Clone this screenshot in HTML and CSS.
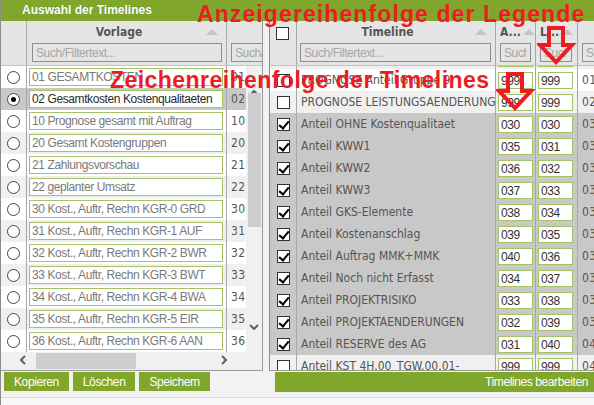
FILE: index.html
```html
<!DOCTYPE html>
<html lang="de">
<head>
  <meta charset="UTF-8">
  <meta name="viewport" content="width=device-width, initial-scale=1.0">
  <title>Auswahl der Timelines</title>
  <link rel="stylesheet" href="styles.css">
</head>
<body>
  <div class="app">
    <header class="titlebar">Auswahl der Timelines</header>

    <div class="workspace">
      <!-- Vorlagen -->
      <section class="panel panel-left">
        <div class="list-head">
          <div class="hcell hcell-radio"></div>
          <div class="hcell hcell-name">
            <div class="hlabel"><span class="htext">Vorlage</span><i class="sort"></i></div>
            <input class="filter" type="text" placeholder="Such/Filtertext...">
          </div>
          <div class="hcell hcell-num">
            <div class="hlabel"></div>
            <input class="filter" type="text" placeholder="Such/Filtertext...">
          </div>
        </div>

        <div class="list-body">
          <div class="rows">
            <div class="row">
              <div class="cell cell-radio"><span class="radio"></span></div>
              <div class="cell cell-name"><input class="field" type="text" value="01 GESAMTKOSTEN"></div>
              <div class="cell cell-num">01</div>
            </div>
            <div class="row selected">
              <div class="cell cell-radio"><span class="radio checked"></span></div>
              <div class="cell cell-name"><input class="field" type="text" value="02 Gesamtkosten Kostenqualitaeten"></div>
              <div class="cell cell-num">02</div>
            </div>
            <div class="row">
              <div class="cell cell-radio"><span class="radio"></span></div>
              <div class="cell cell-name"><input class="field" type="text" value="10 Prognose gesamt mit Auftrag"></div>
              <div class="cell cell-num">10</div>
            </div>
            <div class="row">
              <div class="cell cell-radio"><span class="radio"></span></div>
              <div class="cell cell-name"><input class="field" type="text" value="20 Gesamt Kostengruppen"></div>
              <div class="cell cell-num">20</div>
            </div>
            <div class="row">
              <div class="cell cell-radio"><span class="radio"></span></div>
              <div class="cell cell-name"><input class="field" type="text" value="21 Zahlungsvorschau"></div>
              <div class="cell cell-num">21</div>
            </div>
            <div class="row">
              <div class="cell cell-radio"><span class="radio"></span></div>
              <div class="cell cell-name"><input class="field" type="text" value="22 geplanter Umsatz"></div>
              <div class="cell cell-num">22</div>
            </div>
            <div class="row">
              <div class="cell cell-radio"><span class="radio"></span></div>
              <div class="cell cell-name"><input class="field" type="text" value="30 Kost., Auftr, Rechn KGR-0 GRD"></div>
              <div class="cell cell-num">30</div>
            </div>
            <div class="row">
              <div class="cell cell-radio"><span class="radio"></span></div>
              <div class="cell cell-name"><input class="field" type="text" value="31 Kost., Auftr, Rechn KGR-1 AUF"></div>
              <div class="cell cell-num">31</div>
            </div>
            <div class="row">
              <div class="cell cell-radio"><span class="radio"></span></div>
              <div class="cell cell-name"><input class="field" type="text" value="32 Kost., Auftr, Rechn KGR-2 BWR"></div>
              <div class="cell cell-num">32</div>
            </div>
            <div class="row">
              <div class="cell cell-radio"><span class="radio"></span></div>
              <div class="cell cell-name"><input class="field" type="text" value="33 Kost., Auftr, Rechn KGR-3 BWT"></div>
              <div class="cell cell-num">33</div>
            </div>
            <div class="row">
              <div class="cell cell-radio"><span class="radio"></span></div>
              <div class="cell cell-name"><input class="field" type="text" value="34 Kost., Auftr, Rechn KGR-4 BWA"></div>
              <div class="cell cell-num">34</div>
            </div>
            <div class="row">
              <div class="cell cell-radio"><span class="radio"></span></div>
              <div class="cell cell-name"><input class="field" type="text" value="35 Kost., Auftr, Rechn KGR-5 EIR"></div>
              <div class="cell cell-num">35</div>
            </div>
            <div class="row">
              <div class="cell cell-radio"><span class="radio"></span></div>
              <div class="cell cell-name"><input class="field" type="text" value="36 Kost., Auftr, Rechn KGR-6 AAN"></div>
              <div class="cell cell-num">36</div>
            </div>
          </div>

          <div class="vscroll">
            <div class="vs-up">
              <svg width="10" height="6" viewBox="0 0 10 6"><polyline points="1,5 5,1 9,5" /></svg>
            </div>
            <div class="vs-thumb"></div>
            <div class="vs-down">
              <svg width="10" height="6" viewBox="0 0 10 6"><polyline points="1,1 5,5 9,1" /></svg>
            </div>
          </div>
        </div>

        <div class="hscroll">
          <div class="hs-left">
            <svg width="6" height="10" viewBox="0 0 6 10"><polyline points="5,1 1,5 5,9" /></svg>
          </div>
          <div class="hs-thumb"></div>
          <div class="hs-right">
            <svg width="6" height="10" viewBox="0 0 6 10"><polyline points="1,1 5,5 1,9" /></svg>
          </div>
        </div>
      </section>

      <!-- Timelines -->
      <section class="panel panel-right">
        <div class="grid-head">
          <div class="rcell rcell-check"><span class="check"></span></div>
          <div class="rcell rcell-name">
            <div class="hlabel"><span class="htext">Timeline</span><i class="sort"></i></div>
            <input class="filter" type="text" placeholder="Such/Filtertext...">
          </div>
          <div class="rcell rcell-a">
            <div class="hlabel short"><span>A...</span><i class="sort"></i></div>
            <input class="filter" type="text" placeholder="Such/Filtertext...">
          </div>
          <div class="rcell rcell-l">
            <div class="hlabel short"><span>L...</span><i class="sort"></i></div>
            <input class="filter" type="text" placeholder="Such/Filtertext...">
          </div>
          <div class="rcell rcell-key">
            <div class="hlabel"></div>
            <input class="filter" type="text" placeholder="Such/Filtertext...">
          </div>
        </div>

        <div class="grid-body">
          <div class="grid-rows">
            <div class="rrow">
              <div class="rcell rcell-check"><span class="check"></span></div>
              <div class="rcell rcell-name">PROGNOSE Anteil Gruppe 8</div>
              <div class="rcell rcell-a"><input class="field" type="text" value="999"></div>
              <div class="rcell rcell-l"><input class="field" type="text" value="999"></div>
              <div class="rcell rcell-key">00</div>
            </div>
            <div class="rrow">
              <div class="rcell rcell-check"><span class="check"></span></div>
              <div class="rcell rcell-name">PROGNOSE Anteil Gruppe 9</div>
              <div class="rcell rcell-a"><input class="field" type="text" value="999"></div>
              <div class="rcell rcell-l"><input class="field" type="text" value="999"></div>
              <div class="rcell rcell-key">01</div>
            </div>
            <div class="rrow">
              <div class="rcell rcell-check"><span class="check"></span></div>
              <div class="rcell rcell-name">PROGNOSE LEISTUNGSAENDERUNG</div>
              <div class="rcell rcell-a"><input class="field" type="text" value="999"></div>
              <div class="rcell rcell-l"><input class="field" type="text" value="999"></div>
              <div class="rcell rcell-key">02</div>
            </div>
            <div class="rrow selected">
              <div class="rcell rcell-check"><span class="check checked"></span></div>
              <div class="rcell rcell-name">Anteil OHNE Kostenqualitaet</div>
              <div class="rcell rcell-a"><input class="field" type="text" value="030"></div>
              <div class="rcell rcell-l"><input class="field" type="text" value="030"></div>
              <div class="rcell rcell-key">030</div>
            </div>
            <div class="rrow selected">
              <div class="rcell rcell-check"><span class="check checked"></span></div>
              <div class="rcell rcell-name">Anteil KWW1</div>
              <div class="rcell rcell-a"><input class="field" type="text" value="035"></div>
              <div class="rcell rcell-l"><input class="field" type="text" value="031"></div>
              <div class="rcell rcell-key">031</div>
            </div>
            <div class="rrow selected">
              <div class="rcell rcell-check"><span class="check checked"></span></div>
              <div class="rcell rcell-name">Anteil KWW2</div>
              <div class="rcell rcell-a"><input class="field" type="text" value="036"></div>
              <div class="rcell rcell-l"><input class="field" type="text" value="032"></div>
              <div class="rcell rcell-key">032</div>
            </div>
            <div class="rrow selected">
              <div class="rcell rcell-check"><span class="check checked"></span></div>
              <div class="rcell rcell-name">Anteil KWW3</div>
              <div class="rcell rcell-a"><input class="field" type="text" value="037"></div>
              <div class="rcell rcell-l"><input class="field" type="text" value="033"></div>
              <div class="rcell rcell-key">033</div>
            </div>
            <div class="rrow selected">
              <div class="rcell rcell-check"><span class="check checked"></span></div>
              <div class="rcell rcell-name">Anteil GKS-Elemente</div>
              <div class="rcell rcell-a"><input class="field" type="text" value="038"></div>
              <div class="rcell rcell-l"><input class="field" type="text" value="034"></div>
              <div class="rcell rcell-key">034</div>
            </div>
            <div class="rrow selected">
              <div class="rcell rcell-check"><span class="check checked"></span></div>
              <div class="rcell rcell-name">Anteil Kostenanschlag</div>
              <div class="rcell rcell-a"><input class="field" type="text" value="039"></div>
              <div class="rcell rcell-l"><input class="field" type="text" value="035"></div>
              <div class="rcell rcell-key">035</div>
            </div>
            <div class="rrow selected">
              <div class="rcell rcell-check"><span class="check checked"></span></div>
              <div class="rcell rcell-name">Anteil Auftrag MMK+MMK</div>
              <div class="rcell rcell-a"><input class="field" type="text" value="040"></div>
              <div class="rcell rcell-l"><input class="field" type="text" value="036"></div>
              <div class="rcell rcell-key">036</div>
            </div>
            <div class="rrow selected">
              <div class="rcell rcell-check"><span class="check checked"></span></div>
              <div class="rcell rcell-name">Anteil Noch nicht Erfasst</div>
              <div class="rcell rcell-a"><input class="field" type="text" value="034"></div>
              <div class="rcell rcell-l"><input class="field" type="text" value="037"></div>
              <div class="rcell rcell-key">037</div>
            </div>
            <div class="rrow selected">
              <div class="rcell rcell-check"><span class="check checked"></span></div>
              <div class="rcell rcell-name">Anteil PROJEKTRISIKO</div>
              <div class="rcell rcell-a"><input class="field" type="text" value="033"></div>
              <div class="rcell rcell-l"><input class="field" type="text" value="038"></div>
              <div class="rcell rcell-key">038</div>
            </div>
            <div class="rrow selected">
              <div class="rcell rcell-check"><span class="check checked"></span></div>
              <div class="rcell rcell-name">Anteil PROJEKTAENDERUNGEN</div>
              <div class="rcell rcell-a"><input class="field" type="text" value="032"></div>
              <div class="rcell rcell-l"><input class="field" type="text" value="039"></div>
              <div class="rcell rcell-key">039</div>
            </div>
            <div class="rrow selected">
              <div class="rcell rcell-check"><span class="check checked"></span></div>
              <div class="rcell rcell-name">Anteil RESERVE des AG</div>
              <div class="rcell rcell-a"><input class="field" type="text" value="031"></div>
              <div class="rcell rcell-l"><input class="field" type="text" value="040"></div>
              <div class="rcell rcell-key">040</div>
            </div>
            <div class="rrow">
              <div class="rcell rcell-check"><span class="check"></span></div>
              <div class="rcell rcell-name">Anteil KST 4H.00_TGW.00.01-</div>
              <div class="rcell rcell-a"><input class="field" type="text" value="999"></div>
              <div class="rcell rcell-l"><input class="field" type="text" value="999"></div>
              <div class="rcell rcell-key">041</div>
            </div>
          </div>
        </div>
      </section>
    </div>

    <div class="actions">
      <div class="button-group">
        <button type="button" class="btn">Kopieren</button>
        <button type="button" class="btn">Löschen</button>
        <button type="button" class="btn">Speichern</button>
      </div>
      <div class="edit-bar">Timelines bearbeiten</div>
    </div>
    <div class="statusbar"></div>

    <!-- Hinweise zur Sortierung -->
    <div class="note note-legend">Anzeigereihenfolge der Legende</div>
    <div class="note note-draw">Zeichenreihenfolge der Timelines</div>
    <svg class="note-arrow arrow-legend" width="40" height="40" viewBox="0 0 40 40">
      <path d="M12,3 H26 V20 H35 L19,37 L3,20 H12 Z" />
    </svg>
    <svg class="note-arrow arrow-draw" width="40" height="40" viewBox="0 0 40 40">
      <path d="M12,3 H26 V20 H35 L19,37 L3,20 H12 Z" />
    </svg>
  </div>
</body>
</html>
```

FILE: styles.css
```css
:root {
  --green: #80a62c;
  --head-bg: #e5e5e5;
  --row-alt: #f0f0f0;
  --row-selected: #c8c8c8;
  --grid-line: #a8a8a8;
  --field-border: #a5c267;
  --ui-font: "Liberation Sans", Arial, sans-serif;
  --grid-font: "DejaVu Sans Condensed", "DejaVu Sans", sans-serif;
}

* {
  box-sizing: border-box;
}

body {
  margin: 0;
  background: #f2f2f2;
  font-family: var(--ui-font);
  font-size: 12px;
}

.app {
  position: relative;
  width: 594px;
  height: 405px;
  overflow: hidden;
  border-left: 1px solid #8c8c8c;
}

.titlebar {
  height: 21px;
  padding-left: 21px;
  background: var(--green);
  color: #fff;
  font-weight: bold;
  line-height: 21px;
  text-shadow: 0 0 1px rgba(0, 0, 0, 0.25);
}

.workspace {
  display: flex;
  gap: 6px;
  height: 350px;
}

.panel {
  background: #fff;
  border-bottom: 1px solid #9a9a9a;
  overflow: hidden;
}

.panel-left {
  width: 262px;
  flex: none;
  border-right: 1px solid #9a9a9a;
}

.panel-right {
  flex: 1;
  border-left: 1px solid #8a8a8a;
}

/* header rows */

.list-head,
.grid-head {
  display: flex;
  height: 45px;
  background: var(--head-bg);
  border-bottom: 1px solid #c4c4c4;
}

.hcell,
.grid-head .rcell {
  border-right: 1px solid var(--grid-line);
}

.hcell-radio {
  width: 26px;
}

.hcell-name {
  width: 200px;
  padding: 0 4px 0 5px;
}

.hcell-num {
  flex: 1;
  padding-left: 4px;
  border-right: none;
  overflow: hidden;
}

.hcell-num .filter {
  width: 60px;
}

.hlabel {
  display: flex;
  align-items: center;
  height: 22px;
  font-family: var(--grid-font);
  font-weight: bold;
  color: #555;
}

.hlabel .htext {
  flex: 1;
  text-align: center;
}

.hlabel.short span {
  margin-right: 1px;
}

.sort {
  width: 0;
  height: 0;
  margin-right: 4px;
  border-left: 6px solid transparent;
  border-right: 6px solid transparent;
  border-bottom: 6px solid #c4c4c4;
}

.filter {
  width: 100%;
  height: 19px;
  padding: 0 3px;
  border: 1px solid #8e8e8e;
  background: var(--head-bg);
  font-family: var(--ui-font);
  font-size: 12px;
  letter-spacing: -0.4px;
}

.filter::placeholder {
  color: #a6a6a6;
}

/* Vorlagen list */

.list-body {
  display: flex;
  height: 286px;
}

.rows {
  width: 245px;
}

.row {
  display: flex;
  height: 22px;
}

.row:nth-child(even) {
  background: var(--row-alt);
}

.row.selected {
  background: var(--row-selected);
}

.cell {
  display: flex;
  align-items: center;
  border-right: 1px solid var(--grid-line);
}

.cell-radio {
  width: 26px;
  justify-content: center;
}

.cell-name {
  width: 200px;
  padding: 0 3px 0 2px;
}

.cell-num {
  width: 19px;
  padding-left: 4px;
  border-right: none;
  font-family: var(--grid-font);
  color: #555;
  letter-spacing: 0.5px;
}

.radio {
  width: 13px;
  height: 13px;
  border: 1px solid #444;
  border-radius: 50%;
  background: #fff;
  display: flex;
  align-items: center;
  justify-content: center;
}

.radio.checked::after {
  content: "";
  width: 5px;
  height: 5px;
  border-radius: 50%;
  background: #000;
}

.field {
  width: 100%;
  height: 18px;
  padding: 0 2px;
  border: 1px solid var(--field-border);
  background: #fff;
  color: #7a7a7a;
  font-family: var(--ui-font);
  font-size: 12px;
  letter-spacing: -0.4px;
}

.row.selected .field {
  color: #2a2a2a;
}

/* scrollbars */

.vscroll {
  display: flex;
  flex-direction: column;
  align-items: center;
  width: 16px;
  background: #f0f0f0;
}

.vscroll svg,
.hscroll svg {
  fill: none;
  stroke: #606060;
  stroke-width: 2;
}

.vs-up {
  height: 27px;
  padding-top: 19px;
}

.vs-thumb {
  width: 13px;
  height: 134px;
  background: #cdcdcd;
}

.vs-down {
  margin-top: auto;
  margin-bottom: 19px;
}

.hscroll {
  display: flex;
  align-items: center;
  height: 18px;
  background: #f0f0f0;
}

.hs-left {
  width: 35px;
  padding-left: 19px;
}

.hs-thumb {
  width: 100px;
  height: 16px;
  background: #cdcdcd;
}

.hs-right {
  margin-left: 85px;
}

/* Timelines grid */

.rcell {
  flex: none;
  display: flex;
  align-items: center;
  border-right: 1px solid var(--grid-line);
}

.grid-head .rcell {
  display: block;
}

.rcell-check {
  width: 27px;
  justify-content: center;
}

.grid-head .rcell-check {
  padding: 6px 0 0 6px;
}

.rcell-name {
  width: 199px;
  padding: 0 4px 0 3px;
  overflow: hidden;
  white-space: nowrap;
}

.rcell-a {
  width: 40px;
  padding: 0 4px;
}

.rcell-l {
  width: 42px;
  padding: 0 5px 0 4px;
}

.rcell-key {
  width: 40px;
  padding-left: 4px;
  border-right: none;
}

.grid-head .rcell-a .sort,
.grid-head .rcell-l .sort {
  margin-left: 1px;
}

.grid-body {
  height: 304px;
  overflow: hidden;
}

/* list is scrolled a little past the first entry */
.grid-rows {
  margin-top: -19px;
}

.rrow {
  display: flex;
  height: 22px;
  font-family: var(--grid-font);
  color: #555;
}

.rrow:nth-child(odd) {
  background: var(--row-alt);
}

.rrow.selected {
  background: var(--row-selected);
}

.rrow .rcell {
  align-items: flex-start;
}

.rrow .rcell-check,
.rrow .rcell-name,
.rrow .rcell-key {
  align-items: center;
}

.rrow .rcell-name {
  padding-left: 4px;
}

.rrow .rcell-a,
.rrow .rcell-l {
  padding: 3px 0 0 2px;
}

.rrow .field {
  width: 35px;
  height: 17px;
  color: #333;
}

.rrow .rcell-key {
  letter-spacing: 0.5px;
}

.check {
  position: relative;
  display: block;
  width: 13px;
  height: 13px;
  border: 1px solid #333;
  background: #fff;
}

.check.checked::after {
  content: "";
  position: absolute;
  left: 3px;
  top: 0;
  width: 4px;
  height: 8px;
  border-right: 2px solid #000;
  border-bottom: 2px solid #000;
  transform: rotate(40deg);
}

/* buttons */

.actions {
  display: flex;
  height: 20px;
  margin-top: 1px;
}

.button-group {
  display: flex;
  gap: 4px;
  width: 274px;
  padding-left: 3px;
}

button {
  height: 19px;
  padding: 0 10px;
  border: none;
  background: var(--green);
  color: #fff;
  font-family: var(--ui-font);
  font-size: 12px;
  letter-spacing: -0.4px;
}

.edit-bar {
  flex: 1;
  height: 20px;
  padding-right: 6px;
  background: var(--green);
  color: #fff;
  line-height: 20px;
  text-align: right;
  letter-spacing: -0.4px;
}

.statusbar {
  height: 8px;
  margin-top: 5px;
  border-top: 1px solid #dadada;
  background: #f7f7f7;
}

/* red notes on top */

.note {
  position: absolute;
  color: #ed1c24;
  font-family: var(--ui-font);
  font-size: 23px;
  font-weight: bold;
  line-height: 23px;
  white-space: nowrap;
}

.note-legend {
  left: 196px;
  top: 3px;
  letter-spacing: 1.1px;
}

.note-draw {
  left: 109px;
  top: 69px;
  letter-spacing: 0.45px;
}

.note-arrow {
  position: absolute;
  fill: none;
  stroke: #ed1c24;
  stroke-width: 4;
  stroke-linejoin: miter;
}

.arrow-legend {
  left: 536px;
  top: 25px;
}

.arrow-draw {
  left: 495px;
  top: 71px;
}
```
